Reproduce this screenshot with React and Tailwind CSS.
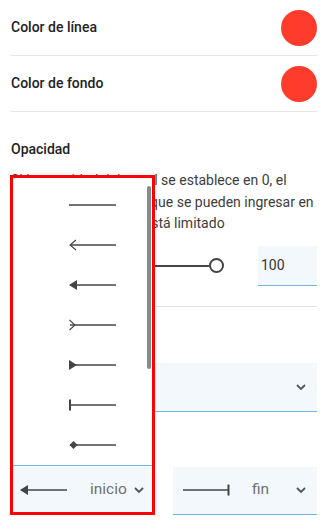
const INK = "#444"

const LineIcon = ({ kind }) => (
  <svg width="48" height="12" viewBox="0 0 48 12" fill="none" stroke={INK} strokeWidth="1.3">
    <line x1={kind === "none" ? 0 : 1} y1="6" x2="47" y2="6" />
    {kind === "open" && <polyline points="7,1 1,6 7,11" strokeWidth="1.1" />}
    {kind === "filled" && <polygon points="0,6 8,1 8,11" fill={INK} stroke="none" />}
    {kind === "tail" && <polyline points="0.5,1 6,6 0.5,11" strokeWidth="1.1" />}
    {kind === "rfilled" && <polygon points="0,1 8,6 0,11" fill={INK} stroke="none" />}
    {kind === "bar" && <line x1="1" y1="0.5" x2="1" y2="11.5" strokeWidth="2" />}
    {kind === "diamond" && <polygon points="4.5,2 8.5,6 4.5,10 0.5,6" fill={INK} stroke="none" />}
    {kind === "endbar" && <line x1="46.5" y1="0.5" x2="46.5" y2="11.5" strokeWidth="2" />}
  </svg>
)

const Chevron = () => (
  <svg width="10" height="6" viewBox="0 0 10 6" fill="none" stroke="#555" strokeWidth="1.8">
    <polyline points="1,1 5,5 9,1" />
  </svg>
)

const ColorRow = ({ label }) => (
  <div className="flex h-[56px] items-center justify-between border-b border-[#e3e3e3]">
    <span className="text-[14px] font-medium text-[#222]">{label}</span>
    <span className="h-[36px] w-[36px] rounded-full bg-[#ff3b2b]" />
  </div>
)

const ArrowSelect = ({ icon, label }) => (
  <div className="flex h-[48px] items-center border-b border-[#70b4e2] bg-[#f3f8fc] pl-[9px] pr-[11px]">
    <LineIcon kind={icon} />
    <span className="ml-[22px] flex-1 text-[15.5px] text-[#707070]">{label}</span>
    <Chevron />
  </div>
)

const items = ["none", "open", "filled", "tail", "rfilled", "bar", "diamond"]

export default function App() {
  return (
    <div className="relative h-[532px] w-[331px] overflow-hidden bg-white font-['Roboto',sans-serif] text-[#333]">
      <div className="pl-[11px] pr-[14px]">
        <ColorRow label="Color de línea" />
        <ColorRow label="Color de fondo" />

        <div className="mt-[27px] text-[14px] font-medium leading-5 text-[#222]">Opacidad</div>
        <p className="mt-[11px] whitespace-nowrap text-[14px] leading-[21.5px] text-[#3d3d3d]">
          Si la opacidad del canal se establece en 0, el
          <br />
          número de caracteres que se pueden ingresar en
          <br />
          el número de valores está limitado
        </p>

        <div className="mt-[11px] flex h-[40px] items-center gap-[34px]">
          <div className="relative flex h-[16px] w-[213px] items-center">
            <div className="h-[2px] flex-1 bg-[#444]" />
            <div className="h-[15px] w-[15px] rounded-full border-2 border-[#444] bg-white" />
          </div>
          <div className="flex h-[40px] flex-1 items-center border-b border-[#70b4e2] bg-[#f3f8fc] pl-[3px] text-[14px] text-[#333]">
            100
          </div>
        </div>

        <div className="mt-[20px] h-px bg-[#e3e3e3]" />

        <div className="mt-[18px] text-[14px] font-medium leading-5 text-[#222]">Estilo de línea</div>
        <div className="mt-[18px] flex h-[49px] items-center justify-end border-b border-[#70b4e2] bg-[#f3f8fc] pr-[11px]">
          <Chevron />
        </div>

        <div className="mt-[17px] text-[14px] font-medium leading-5 text-[#222]">Flechas</div>
        <div className="mt-[18px] grid grid-cols-2 gap-[18px]">
          <ArrowSelect icon="filled" label="inicio" />
          <ArrowSelect icon="endbar" label="fin" />
        </div>
      </div>

      <div className="absolute left-[10px] top-[175px] z-10 h-[340px] w-[145px] border-[3px] border-[#ff0000]">
        <div className="relative h-[288px] border-b border-[#70b4e2] bg-white pt-[7px]">
          {items.map((k) => (
            <div key={k} className="flex h-[40px] items-center pl-[56px]">
              <LineIcon kind={k} />
            </div>
          ))}
          <div className="absolute right-[1px] top-[8px] h-[183px] w-[4px] rounded-full bg-[#8a8a8a]" />
        </div>
      </div>
    </div>
  )
}
